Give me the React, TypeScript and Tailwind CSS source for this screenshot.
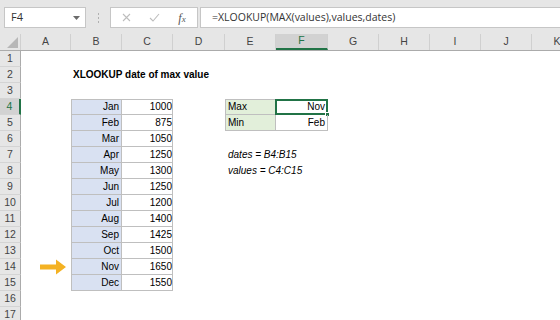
import React from 'react';

type Col = { key: string; w: string };

const COLS: Col[] = [
  { key: 'A', w: 'w-[50px]' },
  { key: 'B', w: 'w-[51px]' },
  { key: 'C', w: 'w-[51px]' },
  { key: 'D', w: 'w-[52px]' },
  { key: 'E', w: 'w-[51px]' },
  { key: 'F', w: 'w-[52px]' },
  { key: 'G', w: 'w-[51px]' },
  { key: 'H', w: 'w-[51px]' },
  { key: 'I', w: 'w-[51px]' },
  { key: 'J', w: 'w-[51px]' },
  { key: 'K', w: 'w-[51px]' },
];

const SALES: [string, number][] = [
  ['Jan', 1000],
  ['Feb', 875],
  ['Mar', 1050],
  ['Apr', 1250],
  ['May', 1300],
  ['Jun', 1250],
  ['Jul', 1200],
  ['Aug', 1400],
  ['Sep', 1425],
  ['Oct', 1500],
  ['Nov', 1650],
  ['Dec', 1550],
];

const ROWS = Array.from({ length: 17 }, (_, i) => i + 1);

function Arrow() {
  return (
    <svg width="27" height="16" viewBox="0 0 27 16">
      <path d="M0 5.5h16V0.5L26 8l-10 7.5V10.5H0z" fill="#f4b223" />
    </svg>
  );
}

function cellFor(col: string, row: number): { content?: React.ReactNode; cls: string } {
  const edge = 'border-[#bfbfbf]';
  if (row >= 4 && row <= 15 && (col === 'B' || col === 'C')) {
    const [month, value] = SALES[row - 4];
    const top = row === 4 ? ' border-t' : '';
    if (col === 'B') {
      return {
        content: month,
        cls: `bg-[#d9e1f2] border-l border-r border-b ${edge} justify-end pr-[2px]${top}`,
      };
    }
    return { content: value, cls: `border-r border-b ${edge} justify-end pr-[1px]${top}` };
  }
  if (row === 4 || row === 5) {
    const top = row === 4 ? ' border-t' : '';
    if (col === 'E') {
      return {
        content: row === 4 ? 'Max' : 'Min',
        cls: `bg-[#e2efda] border-l border-r border-b ${edge} pl-[2px]${top}`,
      };
    }
    if (col === 'F') {
      return {
        content: row === 4 ? 'Nov' : 'Feb',
        cls: `border-r border-b ${edge} justify-end pr-[2px]${top}`,
      };
    }
  }
  if (row === 2 && col === 'B') {
    return { content: 'XLOOKUP date of max value', cls: 'font-bold pl-[2px]' };
  }
  if (row === 7 && col === 'E') {
    return { content: 'dates = B4:B15', cls: 'italic pl-[3px]' };
  }
  if (row === 8 && col === 'E') {
    return { content: 'values = C4:C15', cls: 'italic pl-[3px]' };
  }
  if (row === 14 && col === 'A') {
    return { content: <Arrow />, cls: 'justify-end pr-[4px]' };
  }
  return { cls: '' };
}

function Toolbar() {
  return (
    <div className="flex h-[34px] items-start bg-[#e6e6e6] pt-[7px] font-['Open_Sans',sans-serif] text-[11px] text-[#333]">
      <div className="ml-[4px] flex h-[21px] w-[82px] items-center justify-between border border-[#c6c6c6] bg-white pl-[6px] pr-[5px]">
        <span>F4</span>
        <svg width="7" height="4" viewBox="0 0 7 4">
          <path d="M0 0h7L3.5 4z" fill="#6b6b6b" />
        </svg>
      </div>
      <div className="flex w-[24px] flex-col items-center gap-[2px] pt-[6px]">
        <span className="h-[2px] w-[1px] bg-[#b0b0b0]" />
        <span className="h-[2px] w-[1px] bg-[#b0b0b0]" />
        <span className="h-[2px] w-[1px] bg-[#b0b0b0]" />
      </div>
      <div className="flex h-[21px] w-[88px] items-center border border-[#c6c6c6] bg-white">
        <div className="flex w-[29px] justify-center pl-[2px]">
          <svg width="9" height="9" viewBox="0 0 9 9">
            <path d="M1 1l7 7M8 1L1 8" stroke="#bdbdbd" strokeWidth="1.1" />
          </svg>
        </div>
        <div className="flex w-[28px] justify-center">
          <svg width="11" height="9" viewBox="0 0 11 9">
            <path d="M1 5l3 3 6-7" stroke="#bdbdbd" strokeWidth="1.1" fill="none" />
          </svg>
        </div>
        <div className="flex w-[28px] items-baseline justify-center font-['Liberation_Serif',serif] text-[12px] italic leading-none text-[#555]">
          <span>f</span>
          <span className="text-[9px]">x</span>
        </div>
      </div>
      <div className="ml-[2px] flex h-[21px] flex-1 items-center border border-r-0 border-[#c6c6c6] bg-white pl-[11px] text-[10.5px]">
        =XLOOKUP(MAX(values),values,dates)
      </div>
    </div>
  );
}

export default function App() {
  return (
    <div className="h-[320px] w-[560px] overflow-hidden bg-white font-['Liberation_Sans',Arial,sans-serif] text-[10px] text-black">
      <Toolbar />
      <div className="flex h-[17px] border-b border-[#ababab] bg-[#e6e6e6] text-[10.5px] text-[#444]">
        <div className="flex w-[21px] shrink-0 items-end justify-end border-r border-[#d0d0d0] pb-[2px] pr-[2px]">
          <svg width="11" height="11" viewBox="0 0 11 11">
            <path d="M11 0v11H0z" fill="#b7b7b7" />
          </svg>
        </div>
        {COLS.map((c) => (
          <div
            key={c.key}
            className={`${c.w} flex shrink-0 items-center justify-center border-r border-[#d0d0d0] ${
              c.key === 'F' ? 'border-b-2 border-b-[#217346] bg-[#d2d2d2] text-[#217346]' : ''
            }`}
          >
            {c.key}
          </div>
        ))}
      </div>
      {ROWS.map((r) => (
        <div key={r} className="flex h-[16px]">
          <div
            className={`flex w-[21px] shrink-0 items-center justify-center border-b border-[#d4d4d4] text-[10.5px] ${
              r === 4
                ? 'border-r-2 border-r-[#217346] bg-[#d2d2d2] text-[#217346]'
                : 'border-r border-r-[#ababab] bg-[#e6e6e6] text-[#444]'
            }`}
          >
            {r}
          </div>
          {COLS.map((c) => {
            const cell = cellFor(c.key, r);
            return (
              <div
                key={c.key}
                className={`${c.w} relative flex shrink-0 items-center whitespace-nowrap leading-[16px] ${cell.cls}`}
              >
                {cell.content}
                {r === 4 && c.key === 'F' && (
                  <>
                    <div className="absolute -left-[1px] -right-[1px] -top-[1px] -bottom-[1px] border-2 border-[#217346]" />
                    <div className="absolute -bottom-[3px] -right-[3px] h-[5px] w-[5px] border border-white bg-[#217346]" />
                  </>
                )}
              </div>
            );
          })}
        </div>
      ))}
    </div>
  );
}
